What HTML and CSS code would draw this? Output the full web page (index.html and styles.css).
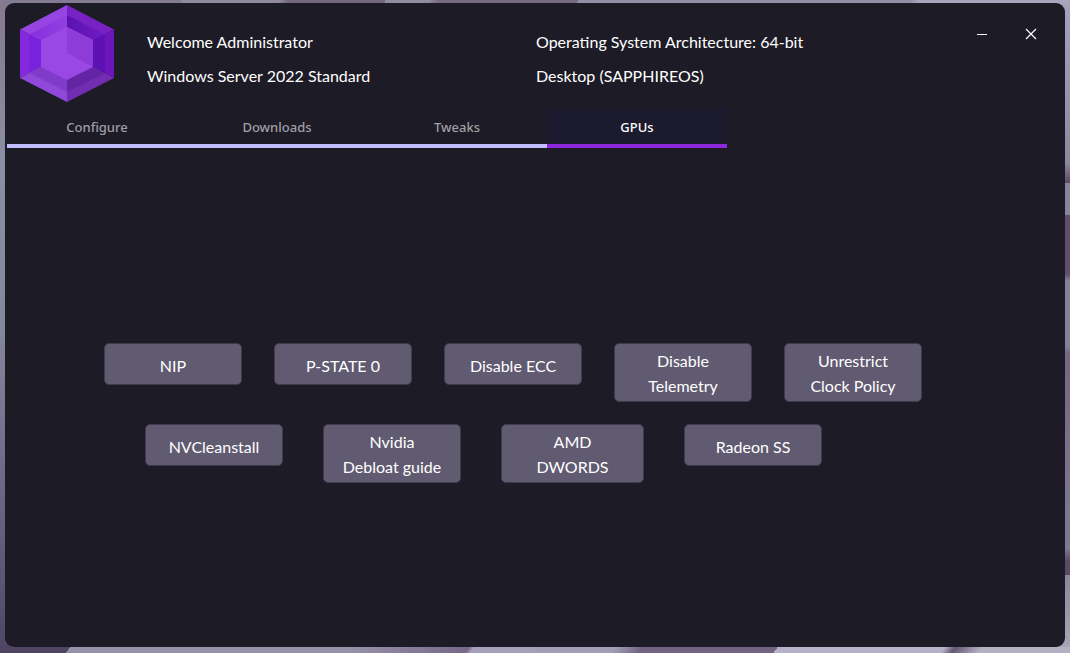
FILE: index.html
```
<!DOCTYPE html>
<html lang="en">
<head>
<meta charset="utf-8">
<meta name="viewport" content="width=device-width, initial-scale=1">
<title>SapphireOS</title>
<link rel="stylesheet" href="styles.css">
</head>
<body class="desktop">
<main class="window">
  <header class="header">
    <svg class="logo" viewBox="0 0 94 97" aria-hidden="true">
      <defs>
        <linearGradient id="lit" x1="0" x2="1"><stop offset="0" stop-color="#8a2ee0"/><stop offset="1" stop-color="#9040e0"/></linearGradient>
        <linearGradient id="shade" x1="0" x2="1"><stop offset="0" stop-color="#5b12b0"/><stop offset="1" stop-color="#6f1bc4"/></linearGradient>
      </defs>
      <path fill="#9645e3" d="M47 0 0 24.500 47 48z"/>
      <path fill="#7822c6" d="M47 0 94 24.500 47 48z"/>
      <path fill="#8529de" d="M0 24.500 47 48 0 73z"/>
      <path fill="#6b15bb" d="M94 24.500 47 48 94 73z"/>
      <path fill="#9048da" d="M0 73 47 48v49z"/>
      <path fill="#732db3" d="M94 73 47 48v49z"/>
      <path fill="url(#lit)" d="M47 10 9 29.500 47 48z"/>
      <path fill="url(#shade)" d="M47 10 85 29.500 47 48z"/>
      <path fill="#7722dc" d="M9 29.500 47 48 9 68z"/>
      <path fill="#5d10b3" d="M85 29.500 47 48 85 68z"/>
      <path fill="#803cc8" d="M9 68 47 48v39z"/>
      <path fill="#6225a3" d="M85 68 47 48v39z"/>
      <path fill="#9947e5" d="M47 22 21 35v27l26 13 26-13V35z"/>
      <path fill="#8d3cd8" d="M47 22v26l26 14V35z"/>
    </svg>
    <div class="info">
      <p>Welcome Administrator</p>
      <p>Windows Server 2022 Standard</p>
    </div>
    <div class="info">
      <p>Operating System Architecture: 64-bit</p>
      <p>Desktop (SAPPHIREOS)</p>
    </div>
    <div class="controls">
      <button class="control" type="button" aria-label="Minimize"><svg width="12" height="12" viewBox="0 0 12 12"><path d="M1 6.500h10" stroke="#fff"/></svg></button>
      <button class="control" type="button" aria-label="Close"><svg width="12" height="12" viewBox="0 0 12 12"><path d="m1 1 10 10M11 1 1 11" stroke="#fff" stroke-width="1.200"/></svg></button>
    </div>
  </header>
  <nav class="tabs" role="tablist">
    <button class="tab" type="button" role="tab" aria-selected="false">Configure</button>
    <button class="tab" type="button" role="tab" aria-selected="false">Downloads</button>
    <button class="tab" type="button" role="tab" aria-selected="false">Tweaks</button>
    <button class="tab tab-active" type="button" role="tab" aria-selected="true">GPUs</button>
  </nav>
  <section class="panel" role="tabpanel" aria-label="GPUs">
    <div class="row">
      <button class="action" type="button">NIP</button>
      <button class="action" type="button">P-STATE 0</button>
      <button class="action" type="button">Disable ECC</button>
      <button class="action action-tall" type="button">Disable<br>Telemetry</button>
      <button class="action action-tall" type="button">Unrestrict<br>Clock Policy</button>
    </div>
    <div class="row row-second">
      <button class="action" type="button">NVCleanstall</button>
      <button class="action action-tall" type="button">Nvidia<br>Debloat guide</button>
      <button class="action action-tall action-wide" type="button">AMD<br>DWORDS</button>
      <button class="action" type="button">Radeon SS</button>
    </div>
  </section>
</main>
</body>
</html>
```
FILE: styles.css
```
* { box-sizing: border-box; }

.desktop {
  display: flex;
  min-height: 100vh;
  margin: 0;
  padding: 3px 5px 6px;
  font-family: Lato, "Open Sans", sans-serif;
  color: #fff;
  background-color: #8f8aa0;
  background-image:
    linear-gradient(115deg, #827b91 0 17%, #908ba0 17% 26%, #74677f 27% 36%, #918ca2 36% 40%, #746a82 41% 54%, #918fa6 54% 85%, #aaa6bd 86%),
    linear-gradient(125deg, #4e4560 0 13%, #9792a8 13% 65%, #77688a 87%, #a5a1b8 88%),
    linear-gradient(125deg, #a29eb5 0 15%, #736482 20% 45%, #b6b2c8 45% 76%, #665773 78%, #b4b1c4 83%),
    linear-gradient(#85798d 0, #8b8fa3 25%, #85879c 50%, #666180 80%, #4e4565 100%),
    linear-gradient(#a5a2bc 0, #8d889e 25%, #5e4965 28%, #88849b 28% 33%, #624e6b 33% 42%, #858098 43% 53%, #756981 54%, #807891 84%, #5c4964 86% 88%, #8b869c 88%, #aaa7b9 100%);
  background-repeat: no-repeat;
  background-position: left top, left bottom, right bottom, left top, right top;
  background-size: 100% 3px, 50% 6px, 50% 6px, 12px 100%, 12px 100%;
}

.window {
  display: flex;
  flex: 1;
  flex-direction: column;
  min-width: 0;
  border-radius: 9px;
  background: #1d1b26;
}

.header {
  display: grid;
  grid-template-columns: 94px 356px 1fr auto;
  column-gap: 33px;
  padding: 2px 18px 0 15px;
}

.logo {
  width: 94px;
  height: 97px;
}

.info {
  padding-top: 20px;
  font-size: 16px;
  line-height: 34px;
  white-space: nowrap;
}

.info p { margin: 0; }

.controls {
  display: flex;
  gap: 17px;
  padding-top: 13px;
}

.control {
  display: grid;
  place-items: center;
  width: 32px;
  height: 32px;
  padding: 0;
  border: 0;
  background: transparent;
}

.tabs {
  display: flex;
  padding: 7px 2px 0;
}

.tab {
  width: 180px;
  height: 39px;
  padding: 0;
  border: 0;
  border-bottom: 4px solid #c2bdff;
  background: transparent;
  color: #a09fa5;
  font: 500 13px "Noto Sans", "Open Sans", sans-serif;
}

.tab-active {
  border-color: #8b27dd;
  background: #1c1a2e;
  color: #fff;
}

.panel {
  display: flex;
  flex: 1;
  flex-direction: column;
  justify-content: center;
  gap: 22px;
  padding: 30px 99px 0;
}

.row {
  display: flex;
  align-items: flex-start;
  gap: 32px;
}

.row-second {
  gap: 40px;
  padding-left: 41px;
}

.action {
  flex: none;
  width: 138px;
  height: 42px;
  padding: 4px 0 0;
  border: 1px solid #3f3a4c;
  border-radius: 5px;
  background: #615b71;
  color: #fff;
  font: 16px/25px Lato, "Open Sans", sans-serif;
}

.action-tall {
  height: 59px;
  padding-top: 2px;
}

.action-wide { width: 143px; }
```
